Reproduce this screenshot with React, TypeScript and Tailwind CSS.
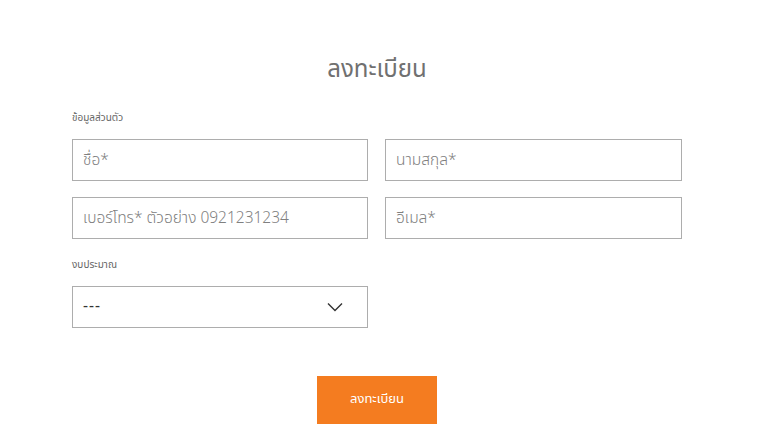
export default function App() {
  const font = { fontFamily: '"Noto Sans Thai", "Noto Sans", "Liberation Sans", sans-serif' };
  const field =
    "h-[42px] w-full border border-[#adadad] px-[10px] text-[15.5px] font-light text-[#555] outline-none placeholder:text-[#808080]";
  return (
    <div className="min-h-[447px] w-[768px] bg-white" style={font}>
      <div className="ml-[72px] w-[610px] pt-[52px]">
        <h1 className="text-center text-[24px] leading-[36px] text-[#707070]">ลงทะเบียน</h1>

        <p className="mt-[23px] text-[10px] leading-[14px] text-[#666]">ข้อมูลส่วนตัว</p>

        <div className="mt-[14px] grid grid-cols-[296px_1fr] gap-x-[17px] gap-y-[16px]">
          <input placeholder="ชื่อ*" className={field} />
          <input placeholder="นามสกุล*" className={field} />
          <input placeholder="เบอร์โทร* ตัวอย่าง 0921231234" className={field} />
          <input placeholder="อีเมล*" className={field} />
        </div>

        <p className="mt-[19px] text-[10px] leading-[14px] text-[#666]">งบประมาณ</p>

        <div className="mt-[14px] w-[296px]">
          <div className="flex h-[42px] items-center justify-between border border-[#adadad] pl-[10px] pr-[24px] text-[15.5px] text-[#333]">
            <span className="tracking-[1px]">---</span>
            <svg width="16" height="10" viewBox="0 0 16 10" fill="none" stroke="#333" strokeWidth="1.4">
              <path d="M1 1.5 L8 8.5 L15 1.5" />
            </svg>
          </div>
        </div>

        <div className="mt-[48px] flex justify-center">
          <button className="h-[48px] w-[120px] bg-[#f47c20] text-[13px] text-white">ลงทะเบียน</button>
        </div>
      </div>
    </div>
  );
}
